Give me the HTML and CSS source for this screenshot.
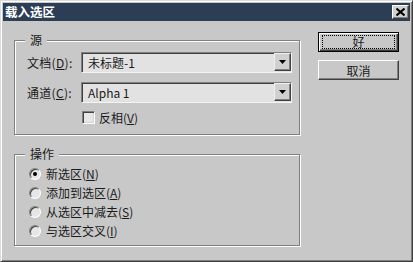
FILE: index.html
```html
<!DOCTYPE html>
<html lang="zh-CN">
<head>
<meta charset="utf-8">
<title>载入选区</title>
<link rel="stylesheet" href="styles.css">
</head>
<body>
<div class="window">
  <div class="titlebar">
    <span class="title">载入选区</span>
    <button class="close" aria-label="关闭">
      <svg width="9" height="8" viewBox="0 0 9 8"><path d="M0.5 0.5L8.5 7.5M8.5 0.5L0.5 7.5" stroke="#000" stroke-width="2"/></svg>
    </button>
  </div>
  <div class="content">
    <div class="main">
      <div class="group group-source">
        <span class="group-title">源</span>
        <div class="row">
          <span class="label">文档(<u>D</u>):</span>
          <div class="select"><span class="value">未标题-1</span><span class="arrow"><svg width="7" height="4" viewBox="0 0 7 4"><path d="M0 0H7L3.5 4Z"/></svg></span></div>
        </div>
        <div class="row row-second">
          <span class="label">通道(<u>C</u>):</span>
          <div class="select"><span class="value">Alpha 1</span><span class="arrow"><svg width="7" height="4" viewBox="0 0 7 4"><path d="M0 0H7L3.5 4Z"/></svg></span></div>
        </div>
        <div class="check-row">
          <span class="checkbox"></span>
          <span class="check-label">反相(<u>V</u>)</span>
        </div>
      </div>
      <div class="group group-op">
        <span class="group-title">操作</span>
        <div class="radio-row"><span class="radio checked"></span>新选区(<u>N</u>)</div>
        <div class="radio-row"><span class="radio"></span>添加到选区(<u>A</u>)</div>
        <div class="radio-row"><span class="radio"></span>从选区中减去(<u>S</u>)</div>
        <div class="radio-row"><span class="radio"></span>与选区交叉(<u>I</u>)</div>
      </div>
    </div>
    <div class="buttons">
      <button class="btn btn-default"><span class="focus">好</span></button>
      <button class="btn"><span class="plain">取消</span></button>
    </div>
  </div>
</div>
</body>
</html>
```
FILE: styles.css
```css
* { box-sizing: border-box; }
html, body { margin: 0; padding: 0; background: #c8c8c8; }
body {
  font-family: "Noto Sans CJK SC", "Noto Sans", sans-serif;
  font-size: 12px;
  color: #1a1a1a;
}
u { text-decoration: underline; text-underline-offset: 1px; }

.window {
  width: 413px;
  height: 262px;
  background: #c8c8c8;
  border: 1px solid;
  border-color: #dcdcdc #404040 #404040 #dcdcdc;
  box-shadow: inset 1px 1px #ffffff, inset -1px -1px #808080;
  padding: 2px;
  display: flex;
  flex-direction: column;
}

.titlebar {
  height: 18px;
  background: #2b3e55;
  display: flex;
  align-items: center;
  justify-content: space-between;
  padding: 0 1px 0 2px;
}
.title {
  color: #ffffff;
  font-weight: bold;
  font-size: 12.5px;
  line-height: 18px;
}
.close {
  width: 17px;
  height: 14px;
  padding: 0;
  background: #d0d0d0;
  border: 1px solid;
  border-color: #ffffff #404040 #404040 #ffffff;
  box-shadow: inset -1px -1px #808080;
  display: flex;
  align-items: center;
  justify-content: center;
}

.content {
  display: flex;
  gap: 18px;
  padding: 11px 0 0 11px;
}
.main {
  width: 286px;
  display: flex;
  flex-direction: column;
}

.group {
  position: relative;
  border: 1px solid #808080;
  box-shadow: inset 1px 1px #ffffff, 1px 1px #ffffff;
  margin-top: 8px;
}
.group-title {
  position: absolute;
  top: -9px;
  left: 10px;
  padding: 0 5px;
  background: #c8c8c8;
  line-height: 16px;
}

.group-source {
  height: 95px;
  padding: 11px 7px 0 12px;
}
.row {
  display: flex;
  align-items: center;
  height: 21px;
}
.row-second { margin-top: 9px; }
.label {
  width: 54px;
  white-space: nowrap;
  letter-spacing: 0.3px;
}
.select {
  width: 211px;
  height: 21px;
  background: #e2e2e2;
  border: 1px solid;
  border-color: #808080 #f4f4f4 #f4f4f4 #808080;
  box-shadow: inset 1px 1px #404040;
  display: flex;
  align-items: flex-start;
  padding-left: 6px;
}
.value {
  line-height: 19px;
}
.arrow {
  margin-left: auto;
  width: 17px;
  height: 18px;
  background: #d0d0d0;
  border: 1px solid;
  border-color: #f0f0f0 #404040 #404040 #f0f0f0;
  box-shadow: inset -1px -1px #808080;
  display: flex;
  align-items: center;
  justify-content: center;
}
.arrow svg { fill: #000000; display: block; }

.check-row {
  display: flex;
  align-items: center;
  height: 13px;
  margin-top: 8px;
  margin-left: 55px;
  gap: 4px;
}
.checkbox {
  width: 13px;
  height: 13px;
  background: #e6e6e6;
  border: 1px solid;
  border-color: #808080 #ffffff #ffffff #808080;
  box-shadow: inset 1px 1px #404040, inset -1px -1px #d4d4d4;
}
.check-label { line-height: 16px; }

.group-op {
  margin-top: 19px;
  height: 92px;
  padding: 9px 7px 0 14px;
}
.radio-row {
  display: flex;
  align-items: center;
  height: 19px;
  white-space: nowrap;
}
.radio {
  position: relative;
  width: 12px;
  height: 12px;
  margin-right: 5px;
  border-radius: 50%;
  background: #e6e6e6;
  border: 1px solid;
  border-color: #808080 #ffffff #ffffff #808080;
  box-shadow: inset 1px 1px #404040;
}
.radio.checked::after {
  content: "";
  position: absolute;
  left: 3px;
  top: 3px;
  width: 4px;
  height: 4px;
  border-radius: 50%;
  background: #000000;
}

.buttons {
  display: flex;
  flex-direction: column;
  gap: 8px;
}
.btn {
  width: 81px;
  height: 20px;
  padding: 0;
  background: #c8c8c8;
  font-family: "Noto Sans CJK SC", "Noto Sans", sans-serif;
  font-size: 12px;
  color: #1a1a1a;
  border: 1px solid;
  border-color: #ffffff #404040 #404040 #ffffff;
  box-shadow: inset -1px -1px #808080;
  display: flex;
  align-items: stretch;
}
.btn-default {
  border: 1px solid #000000;
  box-shadow: inset 1px 1px #ffffff, inset -1px -1px #404040, inset -2px -2px #808080;
  padding: 2px 3px 2px 3px;
}
.focus {
  flex: 1;
  border: 1px dotted #000000;
  display: flex;
  align-items: center;
  justify-content: center;
  line-height: 14px;
}
.plain {
  flex: 1;
  display: flex;
  align-items: center;
  justify-content: center;
}
```
